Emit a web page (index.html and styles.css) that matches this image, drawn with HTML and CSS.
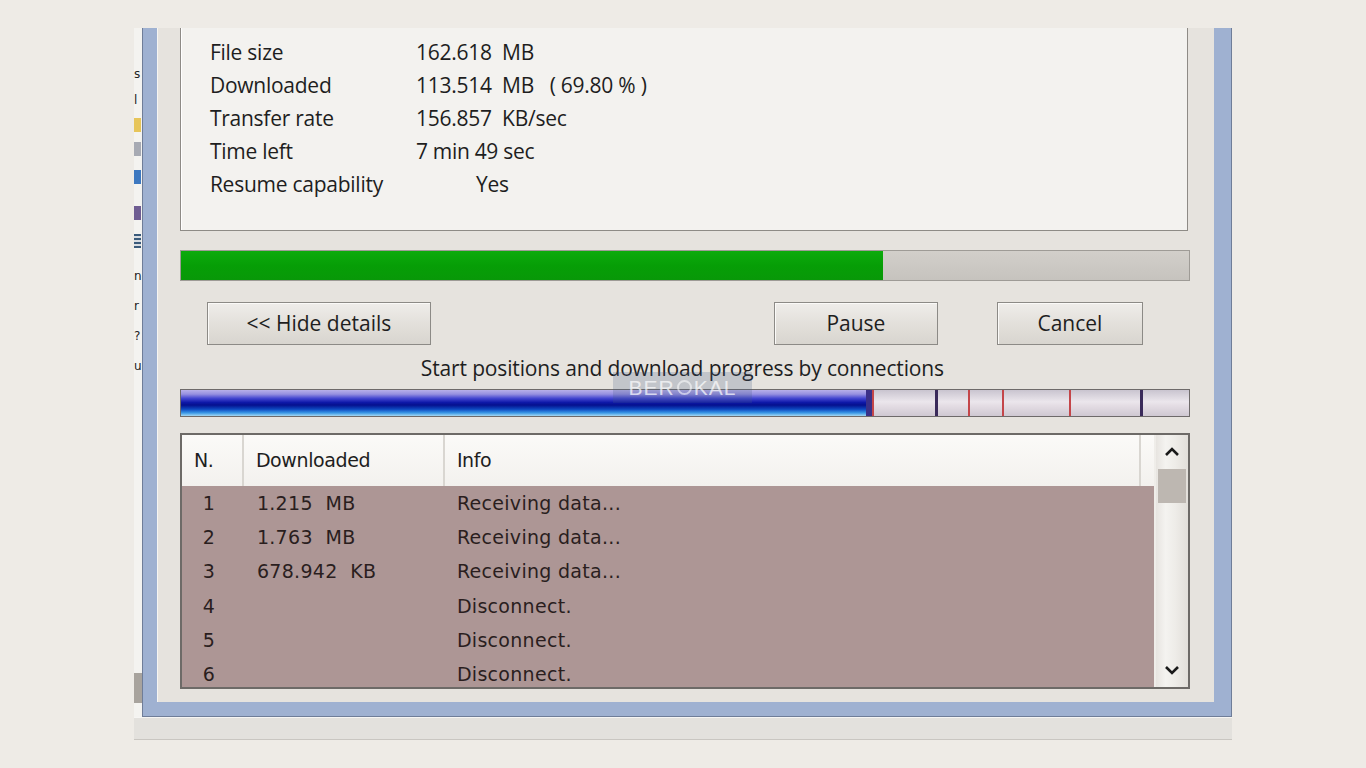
FILE: index.html
```html
<!DOCTYPE html>
<html>
<head>
<meta charset="utf-8">
<link rel="stylesheet" href="styles.css">
</head>
<body>
<div class="shot">
  <div class="main">
    <div class="desk">
      <span class="dk t1">s</span>
      <span class="dk t2">l</span>
      <span class="dk ico yel"></span>
      <span class="dk ico gry"></span>
      <span class="dk ico blu"></span>
      <span class="dk ico pur"></span>
      <span class="dk ico grd"></span>
      <span class="dk t3">n</span>
      <span class="dk t4">r</span>
      <span class="dk t5">?</span>
      <span class="dk t6">u</span>
      <span class="dk patch"></span>
    </div>
    <div class="win">
      <div class="client">
        <div class="info">
          <div class="irow"><span class="lbl">File size</span><span class="val">162.618&nbsp; MB</span></div>
          <div class="irow"><span class="lbl">Downloaded</span><span class="val">113.514&nbsp; MB&nbsp;&nbsp; ( 69.80 % )</span></div>
          <div class="irow"><span class="lbl">Transfer rate</span><span class="val">156.857&nbsp; KB/sec</span></div>
          <div class="irow"><span class="lbl">Time left</span><span class="val tight">7 min 49 sec</span></div>
          <div class="irow"><span class="lbl">Resume capability</span><span class="val yes">Yes</span></div>
        </div>
        <div class="prog"><div class="fill" style="width:69.7%"></div></div>
        <div class="btns">
          <div class="btn b-hide">&lt;&lt; Hide details</div>
          <div class="btn b-pause">Pause</div>
          <div class="btn b-cancel">Cancel</div>
        </div>
        <div class="caption">Start positions and download progress by connections
          <div class="wm">BER<span class="wm-o"></span>KAL</div>
        </div>
        <div class="conn">
          <div class="seg done"></div>
          <div class="seg s1"></div>
          <div class="seg s2 dark"></div>
          <div class="seg s3"></div>
          <div class="seg s4"></div>
          <div class="seg s5"></div>
          <div class="seg s6 dark"></div>
        </div>
        <div class="table">
          <div class="list">
            <div class="thead">
              <div class="th c1">N.</div>
              <div class="th c2">Downloaded</div>
              <div class="th c3">Info</div>
              <div class="th c4"></div>
            </div>
            <div class="tbody">
              <div class="tr"><div class="td c1">1</div><div class="td c2">1.215&nbsp; MB</div><div class="td c3">Receiving data...</div></div>
              <div class="tr"><div class="td c1">2</div><div class="td c2">1.763&nbsp; MB</div><div class="td c3">Receiving data...</div></div>
              <div class="tr"><div class="td c1">3</div><div class="td c2">678.942&nbsp; KB</div><div class="td c3">Receiving data...</div></div>
              <div class="tr"><div class="td c1">4</div><div class="td c2"></div><div class="td c3">Disconnect.</div></div>
              <div class="tr"><div class="td c1">5</div><div class="td c2"></div><div class="td c3">Disconnect.</div></div>
              <div class="tr"><div class="td c1">6</div><div class="td c2"></div><div class="td c3">Disconnect.</div></div>
            </div>
          </div>
          <div class="vscroll">
            <div class="arr">
              <svg width="16" height="12" viewBox="0 0 16 12"><path d="M2 9 L8 3 L14 9" fill="none" stroke="#1a1a1a" stroke-width="2.6"/></svg>
            </div>
            <div class="thumb"></div>
            <div class="track"></div>
            <div class="arr">
              <svg width="16" height="12" viewBox="0 0 16 12"><path d="M2 3 L8 9 L14 3" fill="none" stroke="#1a1a1a" stroke-width="2.6"/></svg>
            </div>
          </div>
        </div>
      </div>
    </div>
  </div>
  <div class="footer"></div>
</div>
</body>
</html>
```

FILE: styles.css
```css
html, body {
  margin: 0;
  padding: 0;
  background: #eeebe6;
}
body {
  width: 1366px;
  height: 768px;
  overflow: hidden;
  font-family: "Open Sans", "Liberation Sans", sans-serif;
  color: #1e1e1e;
}
.shot {
  width: 1098px;
  height: 712px;
  margin: 28px 0 0 134px;
  background: #efeeea;
  display: flex;
  flex-direction: column;
}
.main {
  display: flex;
  height: 689px;
}
.desk {
  width: 8px;
  background: #f4f3f0;
  display: flex;
  flex-direction: column;
  overflow: hidden;
  font-family: "DejaVu Sans", sans-serif;
  font-size: 12px;
  line-height: 16px;
  color: #222;
}
.dk { display: block; flex: none; margin-left: 0; }
.t1 { margin-top: 38px; }
.t2 { margin-top: 10px; }
.ico { width: 7px; height: 14px; margin-top: 10px; }
.yel { background: #e7c55a; }
.gry { background: #a7aab3; }
.blu { background: #3d78c0; margin-top: 14px; }
.pur { background: #6f5d92; margin-top: 22px; }
.grd { background: repeating-linear-gradient(to bottom, #3a5a7a 0 2px, #d9dde2 2px 4px); margin-top: 14px; }
.t3 { margin-top: 20px; }
.t4 { margin-top: 14px; }
.t5 { margin-top: 14px; }
.t6 { margin-top: 14px; }
.patch { width: 8px; height: 30px; background: #a8a39d; margin-top: 299px; }

.win {
  width: 1074px;
  background: #9fb1d1;
  border: 1px solid #6f7d98;
  border-top: 0;
  padding: 0 15px 14px 14px;
  display: flex;
}
.client {
  width: 1010px;
  background: #e6e3de;
  padding: 0 24px 13px 23px;
  display: flex;
  flex-direction: column;
  box-shadow: inset 1px 0 0 #f6f5f2;
}
.info {
  width: 1006px;
  height: 194px;
  background: #f3f2ef;
  border: 1px solid #8e8b86;
  border-top: 0;
  padding-top: 8px;
  box-shadow: inset 1px 0 0 #fff;
}
.irow {
  display: flex;
  height: 33px;
  line-height: 33px;
  font-size: 21px;
  letter-spacing: -0.25px;
  padding-left: 29px;
}
.lbl { width: 206px; }
.yes { padding-left: 60px; }
.tight { letter-spacing: -0.3px; }

.prog {
  margin-top: 19px;
  height: 29px;
  border: 1px solid #9e9b96;
  background: linear-gradient(#d2cfca, #c6c3be);
  display: flex;
}
.fill {
  height: 100%;
  background: linear-gradient(#0cab0c, #069e06 50%, #089808);
}

.btns {
  margin-top: 21px;
  height: 43px;
  display: flex;
  padding: 0 47px 0 27px;
}
.btn {
  box-sizing: border-box;
  height: 43px;
  border: 1px solid #8c8a86;
  background: linear-gradient(#efedea, #e3e0db 50%, #d8d5cf);
  box-shadow: inset 1px 1px 0 #fbfaf8;
  font-size: 21px;
  letter-spacing: 0;
  line-height: 41px;
  text-align: center;
}
.b-hide { width: 224px; }
.b-pause { width: 164px; margin-left: auto; }
.b-cancel { width: 146px; margin-left: 59px; }

.caption {
  position: relative;
  margin-top: 10px;
  height: 26px;
  line-height: 26px;
  margin-bottom: 8px;
  text-align: center;
  font-size: 21px;
  letter-spacing: -0.15px;
  padding-right: 5px;
}
.wm {
  position: absolute;
  left: 433px;
  top: 17px;
  width: 139px;
  height: 31px;
  background: rgba(70, 90, 130, 0.22);
  color: rgba(255, 255, 255, 0.7);
  font-family: "Liberation Sans", sans-serif;
  font-size: 21px;
  letter-spacing: 1px;
  line-height: 30px;
  display: flex;
  align-items: center;
  justify-content: center;
}
.wm-o {
  display: inline-block;
  width: 15px;
  height: 15px;
  border: 2px solid rgba(255,255,255,0.55);
  border-radius: 50%;
  margin: 0 2px;
  box-sizing: border-box;
}

.conn {
  height: 26px;
  border: 1px solid #6e6a6a;
  display: flex;
}
.seg {
  height: 100%;
  background: linear-gradient(#c9c4cf, #ebe6ec 45%, #e4dde4 60%, #cfc8d2);
  border-left: 2px solid #c4464a;
  box-sizing: border-box;
}
.seg.dark { border-left: 3px solid #3a2a5a; }
.seg.done {
  width: 691px;
  border-left: 0;
  border-right: 6px solid #3a3088;
  background: linear-gradient(#b8b0ea 0%, #9690e0 16%, #4446d0 32%, #0e18a8 48%, #05108e 58%, #0d48c0 74%, #3a98e6 88%, #a6d8f2 100%);
}
.s1 { width: 63px; }
.s2 { width: 33px; }
.s3 { width: 34px; }
.s4 { width: 67px; }
.s5 { width: 71px; }
.s6 { flex: 1; }

.table {
  margin-top: 16px;
  height: 252px;
  border: 2px solid #6d6a67;
  display: flex;
  background: #efede9;
}
.list {
  flex: 1;
  display: flex;
  flex-direction: column;
  overflow: hidden;
  font-family: "DejaVu Sans", sans-serif;
}
.thead {
  display: flex;
  height: 51px;
  background: linear-gradient(#fbfaf8, #f3f1ee);
  flex: none;
  border-right: 2px solid #efede9;
}
.th {
  box-sizing: border-box;
  font-size: 19px;
  line-height: 51px;
  letter-spacing: -0.4px;
  border-right: 2px solid #d9d6d1;
  padding-left: 12px;
}
.c1 { width: 62px; }
.c2 { width: 201px; }
.c3 { width: 696px; }
.c4 { flex: 1; border-right: 0; }
.tbody {
  flex: 1;
  background: #ad9695;
  border-right: 2px solid #efede9;
}
.tr {
  display: flex;
  height: 34.2px;
}
.td {
  box-sizing: border-box;
  font-size: 19px;
  letter-spacing: 0.3px;
  line-height: 34px;
  color: #2a1e1e;
}
.td.c1 { text-align: center; padding-right: 8px; }
.td.c2 { padding-left: 13px; }
.td.c3 { padding-left: 12px; }

.vscroll {
  width: 32px;
  display: flex;
  flex-direction: column;
  background: linear-gradient(90deg, #e7e4e0, #f4f3f0 30%, #eeece8 60%, #e2dfda);
}
.arr {
  height: 34px;
  display: flex;
  align-items: center;
  justify-content: center;
}
.thumb {
  height: 34px;
  margin: 0 2px;
  background: #bdb7b1;
}
.track { flex: 1; }

.footer {
  height: 21px;
  background: #e3e1dd;
  border-top: 1px solid #f6f5f3;
  border-bottom: 1px solid #c9c6c1;
}
```
